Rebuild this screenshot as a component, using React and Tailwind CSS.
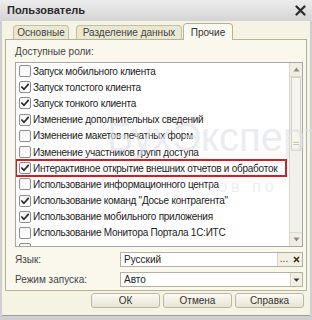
import React from 'react';

const roles = [
  { name: 'Запуск мобильного клиента', on: false },
  { name: 'Запуск толстого клиента', on: true },
  { name: 'Запуск тонкого клиента', on: true },
  { name: 'Изменение дополнительных сведений', on: true },
  { name: 'Изменение макетов печатных форм', on: false },
  { name: 'Изменение участников групп доступа', on: false },
  { name: 'Интерактивное открытие внешних отчетов и обработок', on: true, marked: true },
  { name: 'Использование информационного центра', on: false },
  { name: 'Использование команд "Досье контрагента"', on: true },
  { name: 'Использование мобильного приложения', on: true },
  { name: 'Использование Монитора Портала 1С:ИТС', on: false },
  { name: '', on: false },
];

function CheckBox({ on }) {
  return (
    <div className="w-[12px] h-[12px] shrink-0 rounded-[2px] border border-[#8e8e8e] bg-gradient-to-b from-[#f4f4f4] to-white flex items-center justify-center">
      {on && (
        <svg width="10" height="10" viewBox="0 0 10 10">
          <polyline points="1.8,5 4,7.3 8.3,2.4" fill="none" stroke="#2a2a2a" strokeWidth="1.7" strokeLinecap="round" strokeLinejoin="round" />
        </svg>
      )}
    </div>
  );
}

function Tab({ label, active, className }) {
  if (active) {
    return (
      <div className={`h-[17px] -mb-px rounded-t-[4px] border border-b-0 border-[#b6b29a] bg-[#fbfaf0] flex items-center justify-center text-[10px] text-[#333] z-10 ${className}`}>
        {label}
      </div>
    );
  }
  return (
    <div className={`h-[14px] mt-[2px] rounded-t-[4px] border border-b-0 border-[#c2bea6] bg-[#ebe8d2] flex items-center justify-center text-[10px] text-[#444] ${className}`}>
      {label}
    </div>
  );
}

function Button({ children }) {
  return (
    <div className="w-[69px] h-[15px] rounded-[3px] border border-[#b9b6a6] bg-gradient-to-b from-[#fbfaf4] to-[#e8e5d2] flex items-center justify-center text-[10px] text-[#333]">
      {children}
    </div>
  );
}

export default function App() {
  return (
    <div
      className="w-[312px] h-[320px] bg-[#cfcfcf] flex flex-col overflow-hidden text-[#222]"
      style={{ fontFamily: '"Liberation Sans", Arial, sans-serif' }}
    >
      {/* title bar */}
      <div className="h-[21px] shrink-0 bg-gradient-to-b from-[#ececec] to-[#d4d4d4] flex items-center justify-between pl-[7px] pr-[6px]">
        <span className="text-[11px] font-bold text-[#2a2a2a]">Пользователь</span>
        <svg width="11" height="11" viewBox="0 0 11 11">
          <path d="M1.5 1.5 L9.5 9.5 M9.5 1.5 L1.5 9.5" stroke="#2b2b2b" strokeWidth="2.2" strokeLinecap="round" />
        </svg>
      </div>

      {/* window body */}
      <div className="relative mx-[2px] h-[295px] bg-[#f5f3e2] border-b border-[#9d9d9d] flex flex-col px-[3px]">
        {/* tabs */}
        <div className="flex items-start pl-[8px] pt-[2px] h-[18px]">
          <Tab label="Основные" className="w-[56px]" />
          <Tab label="Разделение данных" className="w-[106px] ml-[7px]" />
          <Tab label="Прочие" className="w-[50px] ml-[1px]" active />
        </div>

        {/* tab panel */}
        <div className="h-[252px] border border-[#b6b29a] bg-[#faf8ec] flex flex-col pl-[9px] pr-[3px]">
          <div className="h-[22px] flex items-end pb-[3px] text-[10px] text-[#444]">Доступные роли:</div>

          <div className="h-[185px] border border-[#a7a7a7] bg-white flex overflow-hidden">
            <div className="flex-1 flex flex-col">
              {roles.map((r, i) => (
                <div key={i} className="relative h-[16.2px] shrink-0 flex items-center gap-[2px] pl-[3px] text-[10px] tracking-[-0.25px] text-[#222] whitespace-nowrap">
                  <CheckBox on={r.on} />
                  <span>{r.name}</span>
                  {r.marked && (
                    <div className="absolute left-[-1px] right-[2px] top-[-1px] bottom-[-1px] border-2 border-[#c9222c]" />
                  )}
                </div>
              ))}
            </div>
            {/* scrollbar */}
            <div className="w-[13px] shrink-0 border-l border-[#d8d6c8] bg-[#f3f2ea] flex flex-col">
              <div className="h-[14px] flex items-center justify-center border-b border-[#dcdacb] bg-[#f0eee2]">
                <svg width="7" height="5" viewBox="0 0 7 5"><polygon points="3.5,0.5 6.5,4.5 0.5,4.5" fill="#8b8b8b" /></svg>
              </div>
              <div className="h-[74px] mx-[1px] border border-[#d3d1c0] bg-[#f7f6ee] flex items-end justify-center pb-[5px]">
                <div className="w-[6px] h-[3px] border-y border-[#c9c7b6]" />
              </div>
              <div className="flex-1" />
              <div className="h-[14px] flex items-center justify-center border-t border-[#dcdacb] bg-[#f0eee2]">
                <svg width="7" height="5" viewBox="0 0 7 5"><polygon points="0.5,0.5 6.5,0.5 3.5,4.5" fill="#8b8b8b" /></svg>
              </div>
            </div>
          </div>

          {/* fields */}
          <div className="mt-[5px] flex items-center h-[15px]">
            <span className="w-[105px] text-[10px] text-[#444]">Язык:</span>
            <div className="flex-1 h-[15px] border border-[#b3b1a4] bg-white flex items-center">
              <span className="flex-1 pl-[3px] text-[10px] text-[#222]">Русский</span>
              <div className="w-[13px] h-full border-l border-[#d6d4c6] bg-[#f2f0e4] flex items-end justify-center pb-[2px] text-[10px] leading-none text-[#444]">...</div>
              <div className="w-[12px] h-full bg-[#f2f0e4] flex items-center justify-center">
                <svg width="7" height="7" viewBox="0 0 7 7"><path d="M1 1 L6 6 M6 1 L1 6" stroke="#3a2a1a" strokeWidth="1.6" /></svg>
              </div>
            </div>
          </div>
          <div className="mt-[5px] flex items-center h-[15px]">
            <span className="w-[105px] text-[10px] text-[#444]">Режим запуска:</span>
            <div className="flex-1 h-[15px] border border-[#b3b1a4] bg-white flex items-center">
              <span className="flex-1 pl-[3px] text-[10px] text-[#222]">Авто</span>
              <div className="w-[12px] h-full border-l border-[#d6d4c6] bg-[#f2f0e4] flex items-center justify-center">
                <svg width="7" height="4" viewBox="0 0 7 4"><polygon points="0.5,0.5 6.5,0.5 3.5,3.8" fill="#333" /></svg>
              </div>
            </div>
          </div>
        </div>

        {/* buttons */}
        <div className="flex justify-end gap-[3px] pr-[3px] mt-[2px]">
          <Button>ОК</Button>
          <Button>Отмена</Button>
          <Button>Справка</Button>
        </div>

        {/* watermark */}
        <div className="pointer-events-none absolute left-[105px] top-[96px] text-[40px] leading-none text-[#dfe1e8] opacity-60 whitespace-nowrap">
          БухЭксперт
        </div>
        <div className="pointer-events-none absolute left-[205px] top-[158px] text-[16px] tracking-[4px] leading-none text-[#e3e4ea] opacity-60 whitespace-nowrap">
          тов по
        </div>
      </div>
    </div>
  );
}
